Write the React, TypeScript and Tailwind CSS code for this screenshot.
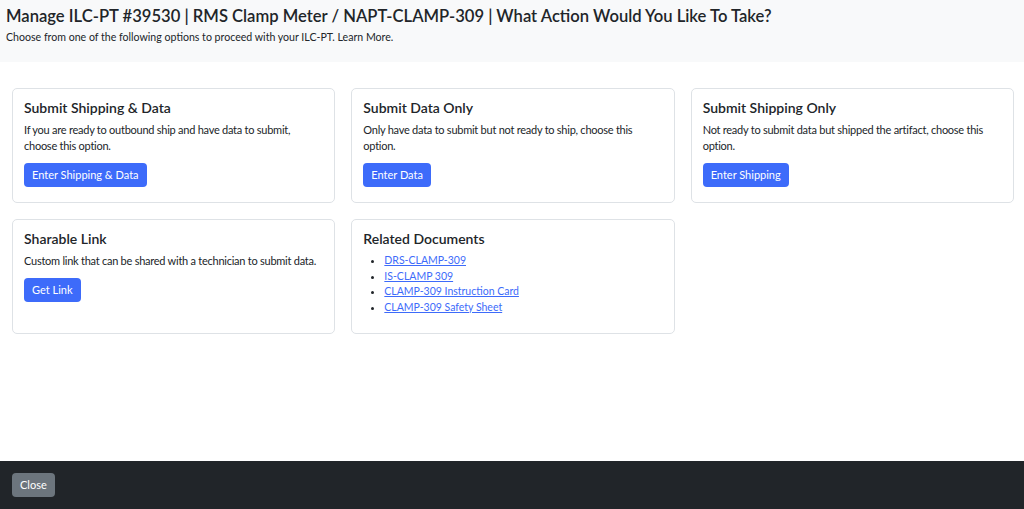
const font = { fontFamily: 'Lato, "Noto Sans", sans-serif' };

function Card({ title, children }: { title: string; children: React.ReactNode }) {
  return (
    <div className="border border-[#dee2e6] rounded-[5px] bg-white px-[11px] pt-[9px] pb-[15px]">
      <h5 className="text-[14px] font-semibold text-[#212529] leading-[20px] mb-[4px]">{title}</h5>
      {children}
    </div>
  );
}

function Btn({ label }: { label: string }) {
  return (
    <button className="bg-[#3d6bfa] text-white text-[11px] leading-[16px] px-[8px] py-[4px] rounded-[4px]">
      {label}
    </button>
  );
}

function Body({ children }: { children: React.ReactNode }) {
  return <p className="text-[11px] leading-[16px] tracking-[-0.25px] text-[#212529] mb-[7px]">{children}</p>;
}

export default function App() {
  const docs = ['DRS-CLAMP-309', 'IS-CLAMP 309', 'CLAMP-309 Instruction Card', 'CLAMP-309 Safety Sheet'];
  return (
    <div className="h-[509px] flex flex-col bg-white text-[#212529]" style={font}>
      <header className="bg-[#f8f9fa] h-[62px] px-[6px] pt-[5px]">
        <h1 className="text-[16.6px] font-semibold leading-[22px]">
          Manage ILC-PT #39530 | RMS Clamp Meter / NAPT-CLAMP-309 | What Action Would You Like To Take?
        </h1>
        <p className="text-[10.6px] leading-[16px] mt-[2px]">
          Choose from one of the following options to proceed with your ILC-PT. Learn More.
        </p>
      </header>

      <main className="flex-1 pl-[12px] pr-[10px] pt-[26px]">
        <div className="grid grid-cols-3 gap-x-[16px] gap-y-[16px]">
          <Card title="Submit Shipping & Data">
            <Body>If you are ready to outbound ship and have data to submit, choose this option.</Body>
            <Btn label="Enter Shipping & Data" />
          </Card>
          <Card title="Submit Data Only">
            <Body>Only have data to submit but not ready to ship, choose this option.</Body>
            <Btn label="Enter Data" />
          </Card>
          <Card title="Submit Shipping Only">
            <Body>Not ready to submit data but shipped the artifact, choose this option.</Body>
            <Btn label="Enter Shipping" />
          </Card>
          <Card title="Sharable Link">
            <Body>Custom link that can be shared with a technician to submit data.</Body>
            <Btn label="Get Link" />
          </Card>
          <Card title="Related Documents">
            <ul className="list-disc pl-[21px] text-[10.5px] leading-[15.5px] pb-[3px]">
              {docs.map((d) => (
                <li key={d}>
                  <a href="#" className="text-[#3d6bfa] underline">
                    {d}
                  </a>
                </li>
              ))}
            </ul>
          </Card>
        </div>
      </main>

      <footer className="bg-[#212529] h-[48px] flex items-center px-[12px]">
        <button className="bg-[#6c757d] text-white text-[11px] leading-[16px] px-[8px] py-[4px] rounded-[4px]">
          Close
        </button>
      </footer>
    </div>
  );
}
